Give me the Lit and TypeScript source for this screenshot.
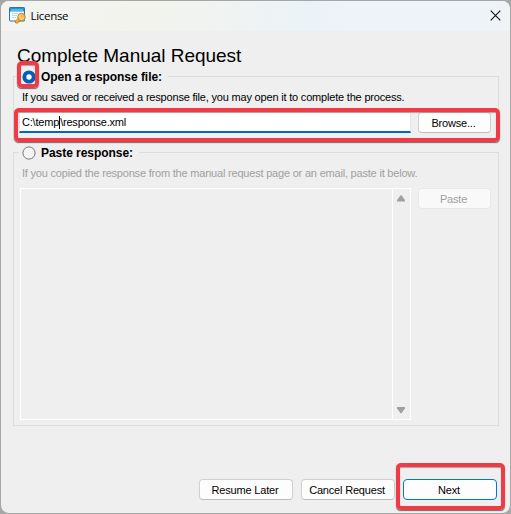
import { LitElement, html, css } from "lit";
import { customElement, property } from "lit/decorators.js";

@customElement("dialog-button")
class DialogButton extends LitElement {
  @property() label = "";
  @property({ reflect: true }) kind = "normal";
  static styles = css`
    :host { display: block; box-sizing: border-box; height: 21px; }
    .face {
      box-sizing: border-box; width: 100%; height: 100%; padding: 0 2px 0 0;
      display: flex; align-items: center; justify-content: center;
      border: 1px solid #d0d0d0; border-bottom-color: #bcbcbc; border-radius: 4px;
      background: #fdfdfd; color: #000; white-space: nowrap;
      font: 11px/14px "Liberation Sans", Arial, sans-serif; letter-spacing: -0.18px;
    }
    :host([kind="disabled"]) .face { color: #a0a0a0; background: #f9f9f9; border-color: #e8e8e8; }
    :host([kind="default"]) .face { border-color: #0078d4; }
  `;
  render() {
    return html`<button class="face" ?disabled=${this.kind === "disabled"}>${this.label}</button>`;
  }
}

@customElement("app-root")
class AppRoot extends LitElement {
  static styles = css`
    :host {
      display: block; width: 511px; height: 514px; box-sizing: border-box; overflow: hidden;
      padding: 1px; background: #a6a8a8; color: #000;
      font: 11px/14px "Liberation Sans", Arial, sans-serif;
    }
    * { box-sizing: border-box; }
    .window {
      position: relative; height: 512px; border-radius: 8px; background: #efefef;
      display: flex; flex-direction: column;
    }
    .titlebar {
      height: 30px; flex: none; display: flex; align-items: center; padding: 0 9.5px 0 8px;
      border-radius: 8px 8px 0 0; background: linear-gradient(90deg, #f3f4f1, #f2f3ec 30%, #ecf3f8 60%, #eef3fa 75%, #edf3f7);
    }
    .app-icon { width: 17px; height: 17px; flex: none; margin-top: -2px; }
    .caption {
      flex: 1; margin-left: 4.5px; font: 11.5px/16px "Open Sans", "Noto Sans", sans-serif;
      letter-spacing: -0.3px; white-space: nowrap;
    }
    .close { width: 11px; height: 11px; margin-top: -2px; }
    .heading {
      margin: 13px 0 0 16px; height: 24px; font-size: 19px; line-height: 24px;
      font-weight: 400; white-space: nowrap; letter-spacing: -0.03px;
    }
    .group { margin: 0 12px; width: 486px; border: 1px solid #dcdcdc; flex: none; }
    .open { margin-top: 8px; height: 65px; border-bottom: none; }
    .paste { margin-top: 11px; height: 274px; }
    .choice {
      display: flex; align-items: center; gap: 5px; height: 14px; width: max-content;
      margin: -7px 0 0 5px; padding: 0 6px 0 3px; background: #efefef; font-weight: 700;
      white-space: nowrap; font-size: 12px; letter-spacing: -0.05px;
    }
    .radio { width: 14px; height: 14px; flex: none; }
    .hint { margin: 6px 0 0 8px; height: 14px; white-space: nowrap; letter-spacing: -0.19px; }
    .paste .hint { color: #a0a0a0; letter-spacing: -0.2px; }
    .row { display: flex; gap: 7px; margin: 8px 0 0 5px; }
    .path {
      width: 392px; height: 21px; padding: 2px 2px 0; background: #fff;
      border: 1px solid #e4e4e4; border-bottom: 2px solid #0067c0; white-space: nowrap;
      letter-spacing: -0.2px; line-height: 14px;
    }
    .caret { display: inline-block; width: 1px; height: 13px; margin-right: 0; background: #000; vertical-align: -3px; }
    .row dialog-button { width: 73px; }
    .paste .row { margin-left: 6px; }
    .area {
      width: 391px; height: 232px; border: 1px solid #fff; display: flex; justify-content: flex-end;
    }
    .scroll {
      width: 18px; border-left: 1px solid #fff; display: flex; flex-direction: column;
      justify-content: space-between; align-items: center; padding: 6px 1px 5px 0;
    }
    .arrow { width: 8px; height: 7px; }
    .footer { display: flex; gap: 8px; margin: 53px 0 0 198px; }
    .footer dialog-button { width: 94px; }
    .mark {
      position: absolute; border: 4px solid #f03b46; border-radius: 5px; pointer-events: none;
      box-shadow: 0 1px 1px -0.5px #6a6a6a, inset 0 1px 1px -0.5px #6a6a6a;
    }
    .mark-radio { left: 16px; top: 60px; width: 22px; height: 27px; }
    .mark-path { left: 13px; top: 107px; width: 486px; height: 34px; }
    .mark-next { left: 395px; top: 462px; width: 109px; height: 47px; }
  `;
  render() {
    return html`
      <div class="window">
        <header class="titlebar">
          <svg class="app-icon" viewBox="0 0 17 17">
            <rect x=".5" y=".5" width="15" height="13.5" rx=".6" fill="#f5fafc" stroke="#376f9c" />
            <path d="M1 1H15V4.5H1z" fill="#159bdc" />
            <path d="M2 3H14" stroke="#8bd6f5" />
            <path d="M3 6.5H9M3 8.5H8M3 10.5H7" stroke="#c4d9e3" />
            <path d="M10 10.5L6.5 14V16H9V14.8H10.3V13.6L12 12" fill="#f6b638" stroke="#bd761a" stroke-width=".8" />
            <circle cx="12.5" cy="10" r="3.7" fill="#ffd066" stroke="#c27a1c" />
            <circle cx="13.5" cy="9" r="1" fill="#fff" stroke="#a56218" stroke-width=".5" />
          </svg>
          <span class="caption">License</span>
          <svg class="close" viewBox="0 0 11 11"><path d="M.7 .7L10.3 10.3M10.3 .7L.7 10.3" stroke="#111" stroke-width="1.1" /></svg>
        </header>
        <h1 class="heading">Complete Manual Request</h1>
        <section class="group open">
          <label class="choice">
            <svg class="radio" viewBox="0 0 14 14"><circle cx="7" cy="7" r="6.6" fill="#005fb8" /><circle cx="7" cy="7" r="2.7" fill="#fff" /></svg>
            <span>Open a response file:</span>
          </label>
          <div class="hint">If you saved or received a response file, you may open it to complete the process.</div>
          <div class="row">
            <div class="path">C:\\temp<span class="caret"></span>\\response.xml</div>
            <dialog-button label="Browse..."></dialog-button>
          </div>
        </section>
        <section class="group paste">
          <label class="choice">
            <svg class="radio" viewBox="0 0 14 14"><circle cx="7" cy="7" r="6.1" fill="#f4f4f4" stroke="#777" /></svg>
            <span>Paste response:</span>
          </label>
          <div class="hint">If you copied the response from the manual request page or an email, paste it below.</div>
          <div class="row">
            <div class="area">
              <div class="scroll">
                <svg class="arrow" viewBox="0 0 8 7"><path d="M3.3 .6Q4 0 4.7 .6L8 5.2V6.5H0V5.2z" fill="#a0a0a0" /></svg>
                <svg class="arrow" viewBox="0 0 8 7"><path d="M3.3 5.9Q4 6.5 4.7 5.9L8 1.3V0H0V1.3z" fill="#a0a0a0" /></svg>
              </div>
            </div>
            <dialog-button kind="disabled" label="Paste"></dialog-button>
          </div>
        </section>
        <footer class="footer">
          <dialog-button label="Resume Later"></dialog-button>
          <dialog-button label="Cancel Request"></dialog-button>
          <dialog-button kind="default" label="Next"></dialog-button>
        </footer>
        <div class="mark mark-radio"></div>
        <div class="mark mark-path"></div>
        <div class="mark mark-next"></div>
      </div>`;
  }
}
